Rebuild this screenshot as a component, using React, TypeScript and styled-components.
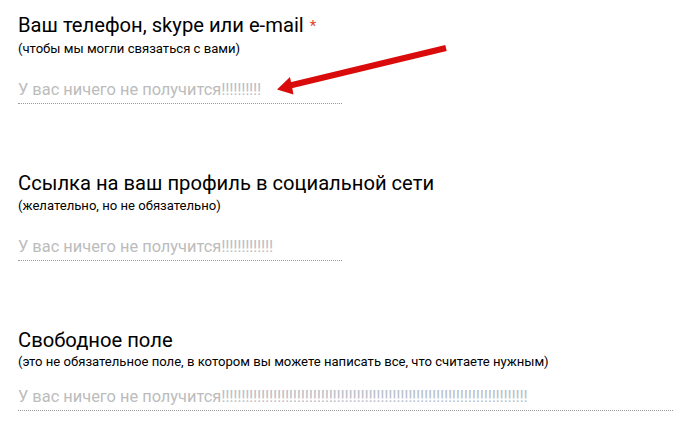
import React from 'react';
import styled, { createGlobalStyle } from 'styled-components';

const GlobalStyle = createGlobalStyle`
    html, body {
        margin: 0;
        padding: 0;
        background: #ffffff;
    }
    body {
        font-family: Roboto, "Noto Sans", Arial, sans-serif;
    }
`;

const Page = styled.div`
    position: relative;
    width: 683px;
    height: 428px;
    padding: 14px 0 0 18px;
    box-sizing: border-box;
    display: flex;
    flex-direction: column;
    gap: 68px;
    overflow: hidden;
`;

const Field = styled.div`
    display: flex;
    flex-direction: column;
`;

const Title = styled.div`
    font-size: 20.2px;
    line-height: 22px;
    color: #000000;
`;

const Required = styled.span`
    color: #db4437;
    font-size: 15px;
    margin-left: 6px;
    vertical-align: 1px;
`;

const Hint = styled.div<{ $compact?: boolean }>`
    font-size: 13.1px;
    line-height: 16px;
    color: #000000;
    margin-top: ${p => (p.$compact ? 3 : 4)}px;
`;

const Answer = styled.div<{ $wide?: boolean; $compact?: boolean }>`
    width: ${p => (p.$wide ? 655 : 324)}px;
    margin-top: ${p => (p.$compact ? 17 : 23)}px;
    padding-bottom: 3px;
    border-bottom: 1px dotted #9a9a9a;
    font-size: 16.4px;
    line-height: 20px;
    color: #bcbcbc;
    white-space: nowrap;
    overflow: hidden;
`;

const Bangs = styled.span`
    color: #b9c0c9;
    letter-spacing: -0.25px;
`;

const Arrow = styled.svg`
    position: absolute;
    left: 0;
    top: 0;
    pointer-events: none;
`;

const fields = [
    {
        title: 'Ваш телефон, skype или e-mail',
        hint: '(чтобы мы могли связаться с вами)',
        required: true,
        bangs: 10,
    },
    {
        title: 'Ссылка на ваш профиль в социальной сети',
        hint: '(желательно, но не обязательно)',
        bangs: 13,
    },
    {
        title: 'Свободное поле',
        hint: '(это не обязательное поле, в котором вы можете написать все, что считаете нужным)',
        bangs: 77,
        wide: true,
        compact: true,
    },
];

const App: React.FC = () => {
    return (
        <>
            <GlobalStyle />
            <Page>
                {fields.map(f => (
                    <Field key={f.title}>
                        <Title>
                            {f.title}
                            {f.required && <Required>*</Required>}
                        </Title>
                        <Hint $compact={f.compact}>{f.hint}</Hint>
                        <Answer $wide={f.wide} $compact={f.compact}>
                            У вас ничего не получится<Bangs>{'!'.repeat(f.bangs)}</Bangs>
                        </Answer>
                    </Field>
                ))}
                <Arrow width="683" height="428" viewBox="0 0 683 428">
                    <line x1="446" y1="48" x2="288" y2="86" stroke="#d90b0b" strokeWidth="6" />
                    <polygon points="277,89.5 290,77 293.5,94.5" fill="#d90b0b" />
                </Arrow>
            </Page>
        </>
    );
};

export default App;
